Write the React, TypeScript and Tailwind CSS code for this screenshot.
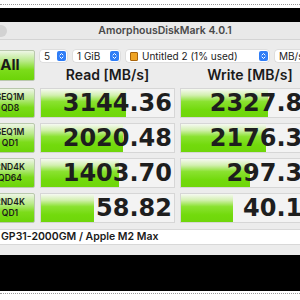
import React from "react";

const rows = [
  { a: "SEQ1M", b: "QD8", read: "3144.36", rp: 64, write: "2327.82", wp: 62 },
  { a: "SEQ1M", b: "QD1", read: "2020.48", rp: 61.5, write: "2176.32", wp: 61 },
  { a: "RND4K", b: "QD64", read: "1403.70", rp: 59, write: "297.39", wp: 49 },
  { a: "RND4K", b: "QD1", read: "58.82", rp: 40, write: "40.13", wp: 37 },
];

function Stepper() {
  return (
    <span className="flex h-[10px] w-[9px] items-center justify-center rounded-[2px] bg-[#2f7df6]">
      <svg width="5" height="8" viewBox="0 0 5 8" fill="none" stroke="white" strokeWidth="1" strokeLinecap="round" strokeLinejoin="round">
        <path d="M1 3 L2.5 1.5 L4 3" />
        <path d="M1 5 L2.5 6.5 L4 5" />
      </svg>
    </span>
  );
}

function Select({ w, children, step = true }: { w: string; children: React.ReactNode; step?: boolean }) {
  return (
    <div className={`flex h-[12px] ${w} shrink-0 items-center gap-1 rounded-[3px] bg-white pl-[4px] pr-[1px] text-[10px] leading-none text-[#222] shadow-[0_0_0_0.5px_rgba(0,0,0,0.12)]`}>
      <span className="flex flex-1 items-center gap-[4px] whitespace-nowrap">{children}</span>
      {step && <Stepper />}
    </div>
  );
}

function Bar({ pct }: { pct: number }) {
  return (
    <div
      className="absolute inset-y-0 left-0 bg-[linear-gradient(to_bottom,#f6f9f2_0%,#d3f0b0_22%,#8ae230_45%,#72da0c_75%,#6fd60a_100%)]"
      style={{ width: `${pct}%` }}
    />
  );
}

function Cell({ value, pct, w }: { value: string; pct: number; w: string }) {
  return (
    <div className={`relative h-[30px] ${w} shrink-0 overflow-hidden border border-[#d6d6d6] bg-[#f3f3f3]`}>
      <Bar pct={pct} />
      <div className="relative flex h-full items-center justify-end pr-[2px] font-['DejaVu_Sans',sans-serif] text-[24px] font-bold leading-none text-[#1e1e1e]">
        {value}
      </div>
    </div>
  );
}

export default function App() {
  return (
    <div className="relative h-[300px] w-[300px] overflow-hidden bg-white font-['Inter','Liberation_Sans',sans-serif]">
      <div className="h-[8px] pt-[4px]">
        <div className="border-t border-dotted border-[#9a9a9a]" />
      </div>
      <div className="h-[14px] bg-black" />
      <div className="ml-[-15px] w-[345px] bg-[#ececec]">
        <div className="relative flex h-[18px] items-center justify-center border-b border-[#d4d4d4] bg-[#e9e9e9]">
          <span className="absolute left-[10px] top-[3px] h-[12px] w-[12px] rounded-full bg-[#d2d2d2]" />
          <span className="pl-[15px] text-[10.5px] font-semibold text-[#4a4a4a]">AmorphousDiskMark 4.0.1</span>
        </div>
        <div className="flex flex-col gap-[5px] pt-[10px]">
          <div className="flex gap-[5px]">
            <button className="flex h-[31px] w-[50px] shrink-0 items-center justify-center rounded-[2px] border border-[#b9c8ad] bg-[linear-gradient(to_bottom,#eef6e6_0%,#b8ea88_35%,#7cdc1a_65%,#6cd408_100%)] text-[15px] font-bold text-[#1a1a1a]">
              All
            </button>
            <div className="flex flex-col">
              <div className="flex gap-[6px]">
                <Select w="w-[27px]">5</Select>
                <Select w="w-[47px]">1 GiB</Select>
                <Select w="w-[143px]">
                  <span className="h-[9px] w-[8px] rounded-[1px] border border-[#a8640c] bg-[#f0a424]" />
                  Untitled 2 (1% used)
                </Select>
                <Select w="w-[40px]">MB/s</Select>
              </div>
              <div className="flex gap-[5px] pt-[5px]">
                <div className="w-[135px] text-center text-[14px] font-semibold leading-[16px] text-[#1a1a1a]">Read [MB/s]</div>
                <div className="w-[140px] text-center text-[14px] font-semibold leading-[16px] text-[#1a1a1a]">Write [MB/s]</div>
              </div>
            </div>
          </div>
          {rows.map((r, i) => (
            <div key={i} className="flex gap-[5px]">
              <button className="flex h-[30px] w-[50px] shrink-0 flex-col items-center justify-center rounded-[2px] border border-[#b9c8ad] bg-[linear-gradient(to_bottom,#eef6e6_0%,#b8ea88_35%,#7cdc1a_65%,#6cd408_100%)] text-[8.5px] font-semibold leading-[11px] text-[#1a1a1a]">
                <span>{r.a}</span>
                <span>{r.b}</span>
              </button>
              <Cell value={r.read} pct={r.rp} w="w-[135px]" />
              <Cell value={r.write} pct={r.wp} w="w-[142px]" />
            </div>
          ))}
        </div>
        <div className="pt-[6px]">
          <div className="flex h-[16px] items-center border-y border-[#d8d8d8] bg-white pl-[16px] text-[10.5px] font-semibold text-[#1a1a1a]">
            GP31-2000GM / Apple M2 Max
          </div>
        </div>
        <div className="h-[10px]" />
      </div>
      <div className="h-[36px] bg-black" />
      <div className="pt-[2px]">
        <div className="border-t border-dotted border-[#9a9a9a]" />
      </div>
    </div>
  );
}
